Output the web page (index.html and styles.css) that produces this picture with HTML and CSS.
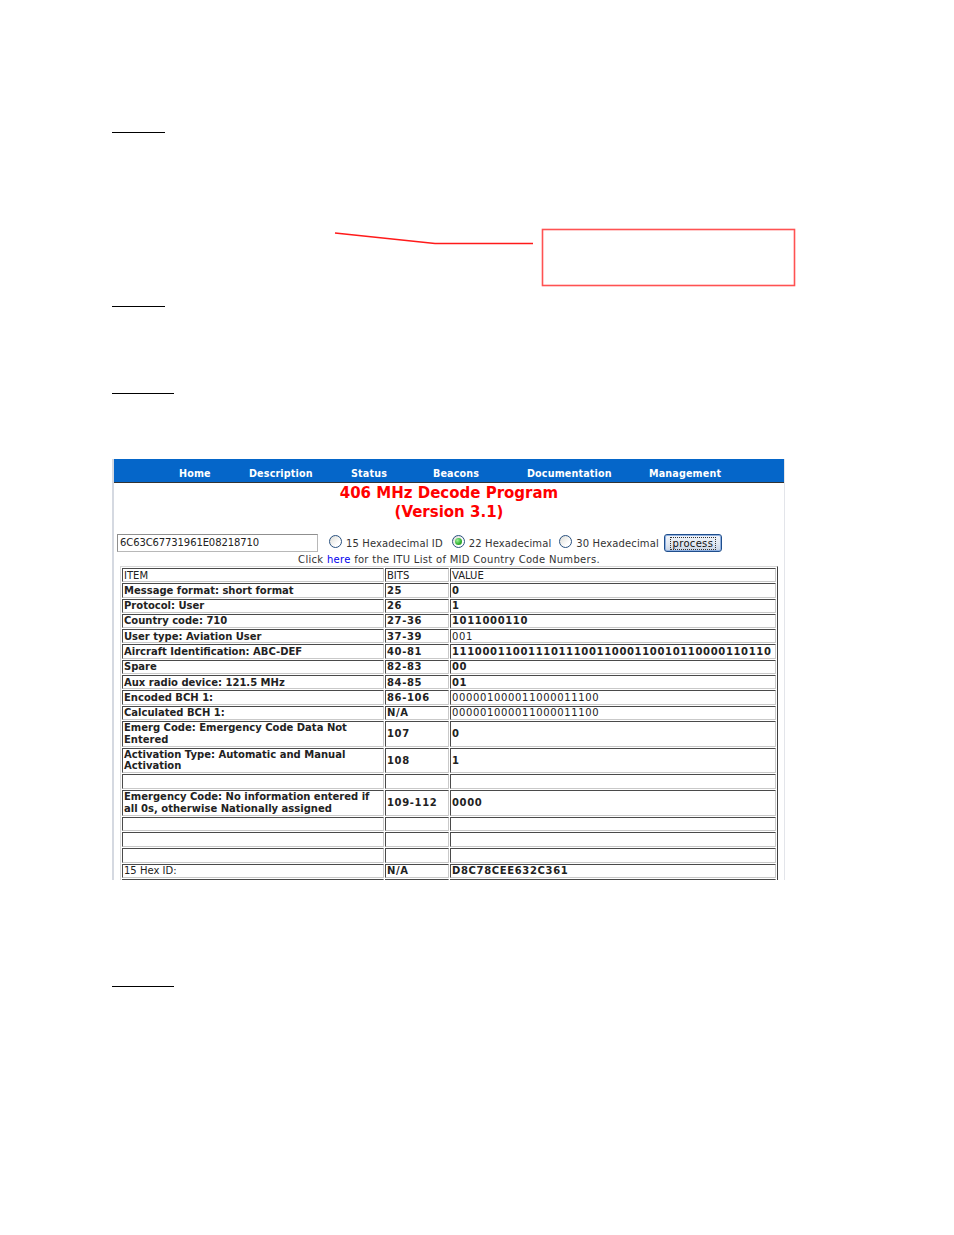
FILE: index.html
```html
<!DOCTYPE html>
<html>
<head>
<meta charset="utf-8">
<title>406 MHz Decode Program</title>
<link rel="stylesheet" href="styles.css">
</head>
<body>
<div class="page">
  <div class="rule short rule1"></div>
  <div class="rule short rule2"></div>
  <div class="rule long rule3"></div>

  <div class="panel">
    <nav class="nav">
      <span>Home</span>
      <span>Description</span>
      <span>Status</span>
      <span>Beacons</span>
      <span>Documentation</span>
      <span>Management</span>
    </nav>
    <h1 class="title">406 MHz Decode Program<br>(Version 3.1)</h1>
    <div class="form-row">
      <div class="hexbox">6C63C67731961E08218710</div>
      <span class="radio"></span><span class="lbl">15 Hexadecimal ID</span>
      <span class="radio checked gap1"></span><span class="lbl">22 Hexadecimal</span>
      <span class="radio gap2"></span><span class="lbl">30 Hexadecimal</span>
      <span class="btn"><span class="focus">process</span></span>
    </div>
    <p class="click">Click <a class="link">here</a> for the ITU List of MID Country Code Numbers.</p>
    <table class="decode">
      <colgroup><col class="c1"><col class="c2"><col class="c3"></colgroup>
      <tr class="head"><td>ITEM</td><td>BITS</td><td>VALUE</td></tr>
      <tr><td>Message format: short format</td><td class="n">25</td><td class="n">0</td></tr>
      <tr><td>Protocol: User</td><td class="n">26</td><td class="n">1</td></tr>
      <tr><td>Country code: 710</td><td class="n">27-36</td><td class="n">1011000110</td></tr>
      <tr><td>User type: Aviation User</td><td class="n">37-39</td><td class="n light">001</td></tr>
      <tr><td>Aircraft Identification: ABC-DEF</td><td class="n">40-81</td><td class="n">111000110011101110011000110010110000110110</td></tr>
      <tr><td>Spare</td><td class="n">82-83</td><td class="n">00</td></tr>
      <tr><td>Aux radio device: 121.5 MHz</td><td class="n">84-85</td><td class="n">01</td></tr>
      <tr><td>Encoded BCH 1:</td><td class="n">86-106</td><td class="n light">000001000011000011100</td></tr>
      <tr><td>Calculated BCH 1:</td><td class="n">N/A</td><td class="n light">000001000011000011100</td></tr>
      <tr><td>Emerg Code: Emergency Code Data Not Entered</td><td class="n">107</td><td class="n">0</td></tr>
      <tr><td>Activation Type: Automatic and Manual Activation</td><td class="n">108</td><td class="n">1</td></tr>
      <tr class="empty"><td>&nbsp;</td><td>&nbsp;</td><td>&nbsp;</td></tr>
      <tr><td>Emergency Code: No information entered if all 0s, otherwise Nationally assigned</td><td class="n">109-112</td><td class="n">0000</td></tr>
      <tr class="empty"><td>&nbsp;</td><td>&nbsp;</td><td>&nbsp;</td></tr>
      <tr class="empty"><td>&nbsp;</td><td>&nbsp;</td><td>&nbsp;</td></tr>
      <tr class="empty"><td>&nbsp;</td><td>&nbsp;</td><td>&nbsp;</td></tr>
      <tr><td class="light">15 Hex ID:</td><td class="n">N/A</td><td class="n">D8C78CEE632C361</td></tr>
      <tr class="empty"><td>&nbsp;</td><td>&nbsp;</td><td>&nbsp;</td></tr>
    </table>
  </div>

  <div class="rule long rule4"></div>

  <svg class="annot" width="954" height="300" viewBox="0 0 954 300" aria-hidden="true">
    <polyline points="335,233 435,243.5 533,243.5" fill="none" stroke="#ff1a1a" stroke-width="1.5"/>
    <rect x="542.5" y="229.5" width="252" height="56" fill="none" stroke="#ff5252" stroke-width="1.6"/>
  </svg>
</div>
</body>
</html>
```

FILE: styles.css
```css
html, body {
  margin: 0;
  padding: 0;
  background: #ffffff;
}

.page {
  position: relative;
  width: 954px;
  min-height: 1235px;
  padding-left: 112px;
  box-sizing: border-box;
  overflow: hidden;
  font-family: "DejaVu Sans", Verdana, sans-serif;
}

.rule {
  height: 1px;
  background: #000;
}
.rule.short { width: 53px; }
.rule.long { width: 62px; }
.rule1 { margin-top: 132px; }
.rule2 { margin-top: 173px; }
.rule3 { margin-top: 86px; }
.rule4 { margin-top: 106px; }

.annot {
  position: absolute;
  left: 0;
  top: 0;
}

/* screenshot panel */
.panel {
  margin-top: 65px;
  width: 673px;
  height: 421px;
  box-sizing: border-box;
  border-left: 2px solid #d5d9e1;
  border-right: 1px solid #e3e5ea;
  overflow: hidden;
  background: #fff;
}

.nav {
  display: grid;
  grid-template-columns: 70px 102px 82px 94px 122px auto;
  align-items: center;
  height: 24px;
  box-sizing: border-box;
  padding: 7px 0 0 65px;
  background: #0566c9;
  border-bottom: 1px solid #333;
  color: #fff;
  font-weight: bold;
  font-size: 9.6px;
  line-height: 12px;
  letter-spacing: 0.15px;
}

.title {
  margin: 0;
  padding-top: 1px;
  text-align: center;
  color: #ff0000;
  font-size: 15px;
  font-weight: bold;
  line-height: 19px;
}

.form-row {
  display: flex;
  align-items: center;
  margin-top: 12px;
  height: 18px;
  font-size: 10px;
  color: #333;
}

.hexbox {
  width: 201px;
  height: 18px;
  box-sizing: border-box;
  margin-left: 3px;
  padding: 0 2px;
  border: 1px solid #8f8f8f;
  border-right-color: #b8b8b8;
  border-bottom-color: #b8b8b8;
  font-size: 10px;
  line-height: 16px;
  color: #222;
  letter-spacing: -0.1px;
}

.radio {
  width: 13px;
  height: 13px;
  box-sizing: border-box;
  border-radius: 50%;
  border: 1px solid #28507e;
  background: linear-gradient(135deg, #dcdcd6 0%, #ffffff 70%);
  margin-left: 11px;
  margin-top: -4px;
  display: inline-flex;
  align-items: center;
  justify-content: center;
}
.radio.gap1 { margin-left: 9px; }
.radio.gap2 { margin-left: 8px; }
.radio.checked::after {
  content: "";
  width: 7px;
  height: 7px;
  border-radius: 50%;
  background: radial-gradient(circle at 35% 35%, #9cf09c 0%, #35b535 55%, #1a7d1a 100%);
}

.lbl {
  margin-left: 4px;
  line-height: 18px;
  padding-top: 2px;
  letter-spacing: 0.12px;
}

.btn {
  margin-left: 5px;
  width: 58px;
  height: 18px;
  box-sizing: border-box;
  border: 1px solid #1f4e8c;
  border-radius: 3px;
  background: linear-gradient(#f3f6fb 0%, #dfe6f0 60%, #c7d3e4 100%);
  box-shadow: inset 0 0 0 1px #8fb0e0;
  display: flex;
  align-items: center;
  justify-content: center;
  color: #111;
}
.btn .focus {
  border: 1px dotted #333;
  padding: 0 2px;
  line-height: 11px;
  font-size: 10px;
  letter-spacing: 0.3px;
}

.click {
  margin: 2px 0 0;
  text-align: center;
  font-size: 10px;
  line-height: 12px;
  color: #333;
  letter-spacing: 0.3px;
}
.link { color: #0000ee; }

/* decode table */
.decode {
  margin-top: 0;
  margin-left: 6px;
  width: 658px;
  table-layout: fixed;
  border-collapse: separate;
  border-spacing: 1px;
  border: 1px solid;
  border-color: #d8d8d8 #404040 #404040 #d8d8d8;
  font-size: 10px;
  font-weight: bold;
  color: #222;
}
.c1 { width: 262px; }
.c2 { width: 64px; }
.c3 { width: 326px; }

.decode td {
  border: 1px solid;
  border-color: #4a4a4a #c9c9c9 #c9c9c9 #4a4a4a;
  padding: 0.5px 1px 0.5px 1px;
  line-height: 11.3px;
  vertical-align: middle;
  white-space: normal;
  overflow: hidden;
}
.decode .empty td { line-height: 11.8px; }
.decode td.n {
  letter-spacing: 0.65px;
  white-space: nowrap;
}
.decode .head td {
  font-weight: normal;
  letter-spacing: 0;
}
.decode td.light { font-weight: normal; }
```
